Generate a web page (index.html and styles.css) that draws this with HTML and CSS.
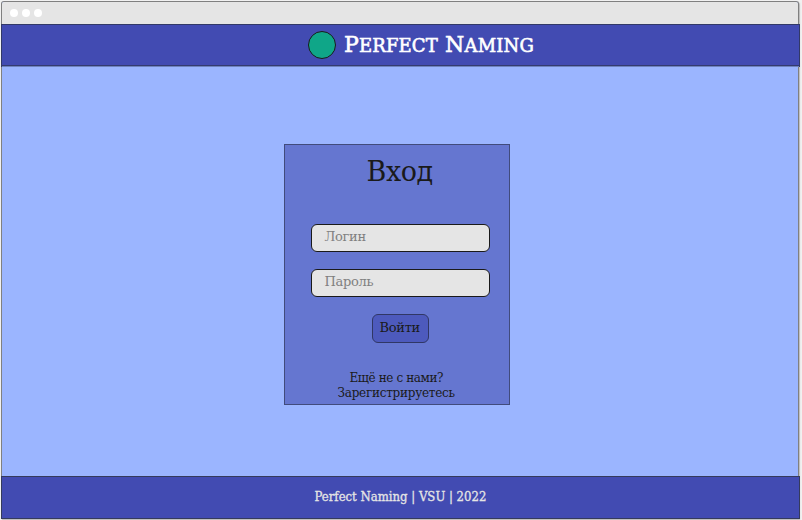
FILE: index.html
```
<!DOCTYPE html>
<html lang="ru">
<head>
<meta charset="utf-8">
<title>Perfect Naming</title>
<link rel="stylesheet" href="styles.css">
</head>
<body>
<div class="window">
  <div class="titlebar"><i class="dot"></i><i class="dot"></i><i class="dot"></i></div>
  <header class="header">
    <span class="logo"></span>
    <span class="brand">P<small>ERFECT</small> N<small>AMING</small></span>
  </header>
  <main class="content">
    <form class="card">
      <h1 class="title">Вход</h1>
      <div class="field login">Логин</div>
      <div class="field password">Пароль</div>
      <div class="button">Войти</div>
      <div class="signup"><span class="question">Ещё не с нами?</span><span class="register">Зарегистрируетесь</span></div>
    </form>
  </main>
  <footer class="footer"><span>Perfect Naming | VSU | 2022</span></footer>
</div>
</body>
</html>
```

FILE: styles.css
```
* { box-sizing: border-box; }
body {
  margin: 0;
  padding: 1px 2px 1px 1px;
  height: 520px;
  overflow: hidden;
  background: #f1f1f1;
  font-family: "Roboto Slab", "DejaVu Serif", serif;
  color: #1a1a1a;
  white-space: nowrap;
}
.window {
  display: flex;
  flex-direction: column;
  width: 798px;
  height: 518px;
  border: 1px solid #808080;
  border-bottom: 0;
  border-radius: 3px 3px 0 0;
  background: #9bb5ff;
  box-shadow: 1px 1px 1px #bbb;
}
.titlebar {
  display: flex;
  align-items: center;
  gap: 4px;
  height: 22px;
  padding: 0 7.5px;
  background: #e5e5e5;
  border-radius: 2px 2px 0 0;
}
.dot { width: 8px; height: 8px; border-radius: 50%; background: #fff; }
.header {
  display: flex;
  align-items: center;
  height: 43px;
  margin: 0 -2px 0 -1px;
  padding-left: 306px;
  gap: 8px;
  background: #424bb2;
  border: 1px solid #323967;
  border-bottom: 0;
  box-shadow: inset 0 -1px #6f83bd, inset 0 -2px #343b70;
}
.logo {
  width: 28px;
  height: 28px;
  margin-top: -3px;
  border: 1.5px solid #1a1a1a;
  border-radius: 50%;
  background: #0fa688;
}
.brand {
  margin-top: -1px;
  font-size: 22px;
  line-height: 28px;
  color: #fff;
  letter-spacing: 0.15px;
  -webkit-text-stroke: 0.6px #fff;
}
.brand small { font-size: 18px; }
.content { flex: 1; padding: 77px 0 0 281.5px; }
.card {
  display: flex;
  flex-direction: column;
  width: 226px;
  height: 261px;
  padding: 0 19px 0 26px;
  background: #6576d0;
  border: 1px solid #414b7c;
}
.title { margin: 10px 0 0 56px; font-size: 27px; line-height: 34px; font-weight: 400; letter-spacing: -0.4px; }
.field {
  width: 179px;
  height: 28px;
  padding-left: 13px;
  border: 1.5px solid #1a1a1a;
  border-radius: 6px;
  background: #e5e5e5;
  color: #808080;
  font-size: 13px;
  line-height: 24px;
  letter-spacing: -0.3px;
}
.login { margin-top: 34.5px; }
.password { margin-top: 17.5px; }
.button {
  width: 57px;
  height: 29px;
  margin: 17px 0 0 61px;
  padding-left: 7px;
  border: 1px solid #303765;
  border-radius: 6px;
  background: #4d5abd;
  font-size: 13px;
  line-height: 25px;
  letter-spacing: -0.3px;
}
.signup { display: flex; flex-direction: column; margin: 28px 0 0 27px; font-size: 12px; line-height: 15px; }
.register { letter-spacing: -0.25px; }
.question { margin-left: 12px; letter-spacing: -0.4px; }
.footer {
  height: 43px;
  margin: 0 -2px 0 -1px;
  padding-left: 312.5px;
  background: #424bb2;
  border: 1px solid #353b5c;
  color: #e5e5e5;
  font-stretch: condensed;
  font-family: "Roboto Slab", "DejaVu Serif Condensed", "DejaVu Serif", serif;
  font-size: 13px;
  line-height: 39px;
  -webkit-text-stroke: 0.3px #e5e5e5;
}
```
